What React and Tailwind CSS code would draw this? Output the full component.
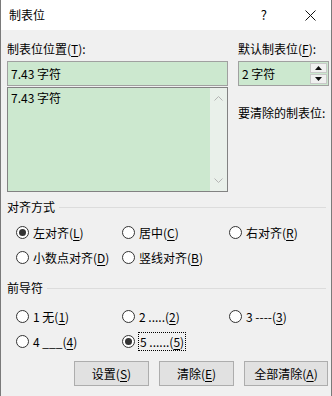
import { useState } from 'react';

const font = { fontFamily: '"Noto Sans CJK SC", "Noto Sans", sans-serif' };

function Radio({ checked, onClick, children, focused }) {
  return (
    <label className="flex items-center gap-[4px] h-[25px] cursor-pointer" onClick={onClick}>
      <span className="w-[13px] h-[13px] rounded-full border border-[#333] bg-white flex items-center justify-center shrink-0">
        {checked && <span className="w-[7px] h-[7px] rounded-full bg-[#333]" />}
      </span>
      <span className={focused ? 'outline outline-1 outline-dotted outline-black px-[1px] leading-[17px]' : 'leading-[16px]'}>
        {children}
      </span>
    </label>
  );
}

function U({ children }) {
  return <span className="underline underline-offset-2">{children}</span>;
}

function Group({ title }) {
  return (
    <div className="flex items-center h-[16px] pr-[5px]">
      <span>{title}</span>
      <div className="flex-1 h-px bg-[#dcdcdc] ml-[4px]" />
    </div>
  );
}

export default function App() {
  const [align, setAlign] = useState('left');
  const [leader, setLeader] = useState(5);

  return (
    <div style={font} className="w-[332px] h-[396px] bg-[#f0f0f0] border-x border-[#7a7a7a] text-[12px] text-black overflow-hidden">
      {/* title bar */}
      <div className="h-[30px] bg-white flex items-center pl-[8px]">
        <span className="text-[12px]">制表位</span>
        <span className="ml-auto mr-[38px] text-[13px]">?</span>
        <svg width="11" height="11" viewBox="0 0 11 11" className="mr-[15px]">
          <path d="M0.5 0.5 L10.5 10.5 M10.5 0.5 L0.5 10.5" stroke="#111" strokeWidth="1" />
        </svg>
      </div>

      <div className="pl-[6px]">
        <div className="flex mt-[11px] gap-[10px]">
          <div className="w-[221px]">
            <div className="h-[16px] leading-[16px]">制表位位置(<U>T</U>):</div>
            <div className="mt-[4px] h-[25px] border border-[#a0a0a0] bg-[#cce8cf] flex items-center pl-[3px]">7.43 字符</div>
            <div className="mt-[1px] h-[105px] border border-[#828282] bg-[#cce8cf] flex">
              <div className="flex-1 pl-[3px] pt-[2px] leading-[16px]">7.43 字符</div>
              <div className="w-[17px] bg-[#e9f0ea] flex flex-col items-center justify-between py-[8px]">
                <svg width="9" height="5" viewBox="0 0 9 5"><path d="M0.5 4.5 L4.5 0.5 L8.5 4.5" fill="none" stroke="#b4b4b4" /></svg>
                <svg width="9" height="5" viewBox="0 0 9 5"><path d="M0.5 0.5 L4.5 4.5 L8.5 0.5" fill="none" stroke="#b4b4b4" /></svg>
              </div>
            </div>
          </div>
          <div className="w-[91px]">
            <div className="h-[16px] leading-[16px]">默认制表位(<U>F</U>):</div>
            <div className="mt-[4px] h-[25px] border border-[#a0a0a0] bg-[#cce8cf] flex">
              <div className="flex-1 flex items-center pl-[3px]">2 字符</div>
              <div className="w-[17px] my-[1px] mr-[1px] flex flex-col gap-[1px]">
                <div className="flex-1 bg-[#f0f0f0] border border-[#c8c8c8] flex items-center justify-center">
                  <svg width="7" height="4" viewBox="0 0 7 4"><path d="M0 4 L3.5 0 L7 4 Z" fill="#111" /></svg>
                </div>
                <div className="flex-1 bg-[#f0f0f0] border border-[#c8c8c8] flex items-center justify-center">
                  <svg width="7" height="4" viewBox="0 0 7 4"><path d="M0 0 L3.5 4 L7 0 Z" fill="#111" /></svg>
                </div>
              </div>
            </div>
            <div className="mt-[19px] h-[16px] leading-[16px]">要清除的制表位:</div>
          </div>
        </div>

        <div className="mt-[7px]">
          <Group title="对齐方式" />
          <div className="mt-[5px] pl-[9px] grid grid-cols-[106px_107px_1fr]">
            <Radio checked={align === 'left'} onClick={() => setAlign('left')}>左对齐(<U>L</U>)</Radio>
            <Radio checked={align === 'center'} onClick={() => setAlign('center')}>居中(<U>C</U>)</Radio>
            <Radio checked={align === 'right'} onClick={() => setAlign('right')}>右对齐(<U>R</U>)</Radio>
            <Radio checked={align === 'decimal'} onClick={() => setAlign('decimal')}>小数点对齐(<U>D</U>)</Radio>
            <Radio checked={align === 'bar'} onClick={() => setAlign('bar')}>竖线对齐(<U>B</U>)</Radio>
          </div>
        </div>

        <div className="mt-[10px]">
          <Group title="前导符" />
          <div className="mt-[8px] pl-[9px] grid grid-cols-[106px_107px_1fr]">
            <Radio checked={leader === 1} onClick={() => setLeader(1)}>1 无(<U>1</U>)</Radio>
            <Radio checked={leader === 2} onClick={() => setLeader(2)}>2 .....(<U>2</U>)</Radio>
            <Radio checked={leader === 3} onClick={() => setLeader(3)}>3 ----(<U>3</U>)</Radio>
            <Radio checked={leader === 4} onClick={() => setLeader(4)}>4 ___(<U>4</U>)</Radio>
            <Radio checked={leader === 5} focused={leader === 5} onClick={() => setLeader(5)}>5 ......(<U>5</U>)</Radio>
          </div>
        </div>

        <div className="mt-[7px] flex pl-[67px] gap-[10px]">
          <button className="w-[75px] h-[25px] bg-[#e1e1e1] border border-[#adadad]">设置(<U>S</U>)</button>
          <button className="w-[75px] h-[25px] bg-[#e1e1e1] border border-[#adadad]">清除(<U>E</U>)</button>
          <button className="w-[84px] h-[25px] bg-[#e1e1e1] border border-[#adadad]">全部清除(<U>A</U>)</button>
        </div>
      </div>
    </div>
  );
}
